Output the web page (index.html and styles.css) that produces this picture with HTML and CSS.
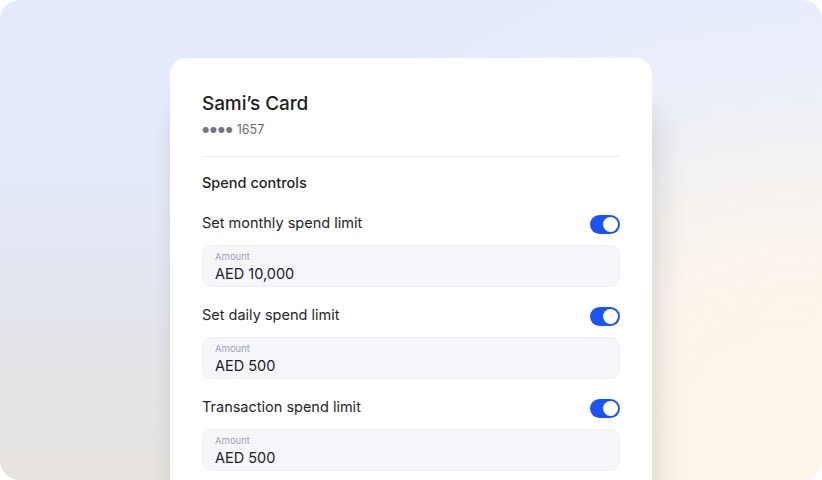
FILE: index.html
```html
<!DOCTYPE html>
<html lang="en">
<head>
	<meta charset="UTF-8">
	<title>Spend controls</title>
	<link rel="stylesheet" href="styles.css">
</head>
<body>
<div class="frame">
	<div class="card">
		<h1 class="title">Sami’s Card</h1>
		<div class="number"><span class="dots">●●●●</span> 1657</div>
		<div class="divider"></div>
		<h2 class="section">Spend controls</h2>

		<div class="row">
			<span class="label">Set monthly spend limit</span>
			<span class="toggle on"></span>
		</div>
		<div class="field">
			<div class="field-label">Amount</div>
			<div class="field-value">AED 10,000</div>
		</div>

		<div class="row">
			<span class="label">Set daily spend limit</span>
			<span class="toggle on"></span>
		</div>
		<div class="field">
			<div class="field-label">Amount</div>
			<div class="field-value">AED 500</div>
		</div>

		<div class="row">
			<span class="label">Transaction spend limit</span>
			<span class="toggle on"></span>
		</div>
		<div class="field">
			<div class="field-label">Amount</div>
			<div class="field-value">AED 500</div>
		</div>
	</div>
</div>
</body>
</html>
```

FILE: styles.css
```css
html,body{
	margin:0;
	padding:0;
	background:#fff;
}
body{
	font-family: Inter, "Liberation Sans", sans-serif;
	color:#1f1f23;
}
.frame{
	width:822px;
	height:480px;
	border-radius:20px;
	overflow:hidden;
	box-sizing:border-box;
	padding-top:58px;
	display:flex;
	justify-content:center;
	align-items:flex-start;
	background:
		radial-gradient(ellipse 85% 120% at 100% 100%, rgba(254,246,234,1) 0%, rgba(253,246,236,0.9) 40%, rgba(244,243,246,0.5) 70%, rgba(244,243,246,0) 95%),
		linear-gradient(180deg, #e3ebfc 0%, #e4eaf8 35%, #e3e4ea 70%, #e6e3de 100%);
}
.card{
	width:482px;
	height:460px;
	box-sizing:border-box;
	padding:34px 32px 0;
	background:#fff;
	border-radius:16px;
	box-shadow:10px 55px 28px rgba(30,32,45,0.10), -3px 40px 16px rgba(30,32,45,0.04);
}
.title{
	margin:0;
	font-size:19px;
	line-height:24px;
	font-weight:500;
	letter-spacing:-0.1px;
}
.number{
	margin-top:5px;
	font-size:12.5px;
	line-height:18px;
	color:#6c6c74;
}
.dots{
	font-size:8px;
	letter-spacing:0.5px;
	vertical-align:1px;
	color:#75757c;
}
.divider{
	margin-top:17px;
	height:1px;
	background:#ececef;
}
.section{
	margin:16px 0 0;
	font-size:14.5px;
	line-height:20px;
	font-weight:500;
}
.row{
	margin-top:20px;
	height:20px;
	display:flex;
	align-items:center;
	justify-content:space-between;
}
.field + .row{
	margin-top:18px;
}
.label{
	font-size:14.5px;
	line-height:20px;
	color:#25252a;
}
.toggle{
	width:30px;
	height:19px;
	border-radius:10px;
	background:#1b54f6;
	position:relative;
	margin-top:2px;
}
.toggle::after{
	content:"";
	position:absolute;
	right:2px;
	top:2px;
	width:15px;
	height:15px;
	border-radius:50%;
	background:#fff;
}
.field{
	margin-top:12px;
	height:42px;
	box-sizing:border-box;
	padding:5px 12px 0;
	background:#f6f6fa;
	border:1px solid #f0f0f5;
	border-radius:9px;
}
.field-label{
	font-size:9.5px;
	line-height:11px;
	color:#9aa1b6;
}
.field-value{
	margin-top:3px;
	font-size:14.5px;
	line-height:18px;
	color:#202024;
}
```
